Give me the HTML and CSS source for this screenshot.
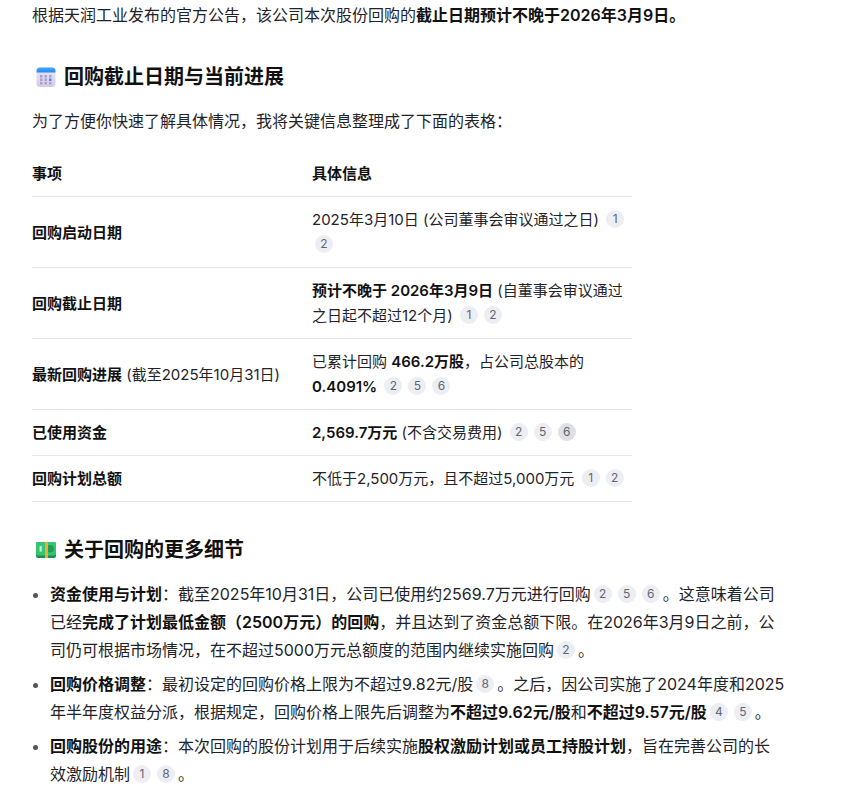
FILE: index.html
```html
<!DOCTYPE html>
<html lang="zh-CN">
<head>
<meta charset="utf-8">
<title>回购截止日期与当前进展</title>
<link rel="stylesheet" href="styles.css">
</head>
<body>
<main class="answer">
  <p class="para">根据天润工业发布的官方公告，该公司本次股份回购的<strong>截止日期预计不晚于2026年3月9日。</strong></p>
  <h2 class="heading">
    <svg class="emoji" viewBox="0 0 20 20" aria-hidden="true">
      <defs>
        <linearGradient id="calBody" x1="0" y1="0" x2="0" y2="1">
          <stop offset="0" stop-color="#ece6f7"/>
          <stop offset="1" stop-color="#d5c9ec"/>
        </linearGradient>
        <linearGradient id="calTop" x1="0" y1="0" x2="0" y2="1">
          <stop offset="0" stop-color="#4aa8fb"/>
          <stop offset="1" stop-color="#1f8af2"/>
        </linearGradient>
      </defs>
      <rect x="0.5" y="0.5" width="19" height="19.5" rx="3.5" fill="url(#calBody)"/>
      <path d="M0.5 5.5V4A3.5 3.5 0 0 1 4 .5h12A3.5 3.5 0 0 1 19.5 4V5.5z" fill="url(#calTop)"/>
      <g fill="#a9a1c0">
        <rect x="4" y="8" width="2.5" height="2.5"/><rect x="8.5" y="8" width="2.5" height="2.5"/><rect x="13" y="8" width="2.5" height="2.5"/>
        <rect x="4" y="11.5" width="2.5" height="2.5"/><rect x="8.5" y="11.5" width="2.5" height="2.5"/>
        <rect x="4" y="15" width="2.5" height="2.5"/><rect x="8.5" y="15" width="2.5" height="2.5"/><rect x="13" y="15" width="2.5" height="2.5"/>
      </g>
      <rect x="13" y="11.5" width="2.5" height="2.5" fill="#2f95f5"/>
    </svg>
    <span>回购截止日期与当前进展</span>
  </h2>
  <p class="para">为了方便你快速了解具体情况，我将关键信息整理成了下面的表格：</p>
  <table class="facts">
    <thead>
      <tr><th>事项</th><th>具体信息</th></tr>
    </thead>
    <tbody>
      <tr>
        <td><strong>回购启动日期</strong></td>
        <td>2025年3月10日 (公司董事会审议通过之日) <span class="cite">1</span><span class="cite">2</span></td>
      </tr>
      <tr>
        <td><strong>回购截止日期</strong></td>
        <td><strong>预计不晚于 2026年3月9日</strong> (自董事会审议通过之日起不超过12个月) <span class="cite">1</span><span class="cite">2</span></td>
      </tr>
      <tr>
        <td><strong>最新回购进展</strong> (截至2025年10月31日)</td>
        <td>已累计回购 <strong>466.2万股</strong>，占公司总股本的 <strong>0.4091%</strong> <span class="cite">2</span><span class="cite">5</span><span class="cite">6</span></td>
      </tr>
      <tr>
        <td><strong>已使用资金</strong></td>
        <td><strong>2,569.7万元</strong> (不含交易费用) <span class="cite">2</span><span class="cite">5</span><span class="cite cite-active">6</span></td>
      </tr>
      <tr>
        <td><strong>回购计划总额</strong></td>
        <td>不低于2,500万元，且不超过5,000万元 <span class="cite">1</span><span class="cite">2</span></td>
      </tr>
    </tbody>
  </table>
  <h2 class="heading heading-second">
    <svg class="emoji" viewBox="0 0 20 20" aria-hidden="true">
      <rect x="0" y="2" width="20" height="16" rx="2" fill="#1b8f4d"/>
      <rect x="0" y="2" width="20" height="13.5" rx="2" fill="#35c46f"/>
      <circle cx="14" cy="8.8" r="3.8" fill="#1f9d55"/>
      <rect x="9" y="2" width="3" height="16" fill="#f2a93b"/>
      <rect x="3.6" y="6" width="2.2" height="5.6" fill="#c9f2d6"/>
    </svg>
    <span>关于回购的更多细节</span>
  </h2>
  <ul class="details">
    <li><strong>资金使用与计划</strong>：截至2025年10月31日，公司已使用约2569.7万元进行回购<span class="cite">2</span><span class="cite">5</span><span class="cite">6</span>。这意味着公司已经<strong>完成了计划最低金额（2500万元）的回购</strong>，并且达到了资金总额下限。在2026年3月9日之前，公司仍可根据市场情况，在不超过5000万元总额度的范围内继续实施回购<span class="cite">2</span>。</li>
    <li><strong>回购价格调整</strong>：最初设定的回购价格上限为不超过9.82元/股<span class="cite">8</span>。之后，因公司实施了2024年度和2025年半年度权益分派，根据规定，回购价格上限先后调整为<strong>不超过9.62元/股</strong>和<strong>不超过9.57元/股</strong><span class="cite">4</span><span class="cite">5</span>。</li>
    <li><strong>回购股份的用途</strong>：本次回购的股份计划用于后续实施<strong>股权激励计划或员工持股计划</strong>，旨在完善公司的长效激励机制<span class="cite">1</span><span class="cite">8</span>。</li>
  </ul>
</main>
</body>
</html>
```
FILE: styles.css
```css
html, body {
  margin: 0;
  padding: 0;
  background: #fff;
}

body {
  font-family: Inter, "Noto Sans CJK SC", sans-serif;
  color: #1f2329;
}

.answer {
  width: 753px;
  padding: 1px 0 0 32px;
}

.para {
  margin: 0;
  font-size: 16px;
  line-height: 28px;
}

strong {
  font-weight: 600;
  color: #111;
}

.heading {
  display: flex;
  align-items: center;
  gap: 8px;
  margin: 34px 0 16px 4px;
  font-size: 20px;
  font-weight: 700;
  line-height: 28px;
  color: #111;
}

.heading-second {
  margin-top: 34px;
}

.emoji {
  width: 20px;
  height: 20px;
  flex: none;
}

.facts {
  width: 600px;
  margin-top: 16px;
  border-collapse: collapse;
  table-layout: fixed;
  font-size: 15px;
  line-height: 25px;
}

.facts th,
.facts td {
  box-sizing: border-box;
  padding: 10px 4px 10px 0;
  text-align: left;
  vertical-align: middle;
  border-bottom: 1px solid #e5e5e5;
}

.facts th {
  font-weight: 600;
  color: #111;
}

.facts th:first-child,
.facts td:first-child {
  width: 280px;
}

.cite {
  display: inline-flex;
  align-items: center;
  justify-content: center;
  width: 18px;
  height: 18px;
  margin: 0 3px;
  border-radius: 50%;
  background: #eceef3;
  color: #5f6672;
  font-size: 12px;
  line-height: 18px;
  font-weight: 400;
  vertical-align: 2px;
}

.cite-active {
  background: #dfe0e4;
}

.details {
  margin: 16px 0 0;
  padding: 0 0 0 18px;
  font-size: 16px;
  line-height: 28px;
}

.details li {
  margin-bottom: 6px;
}

.details li::marker {
  color: #555;
}
```
